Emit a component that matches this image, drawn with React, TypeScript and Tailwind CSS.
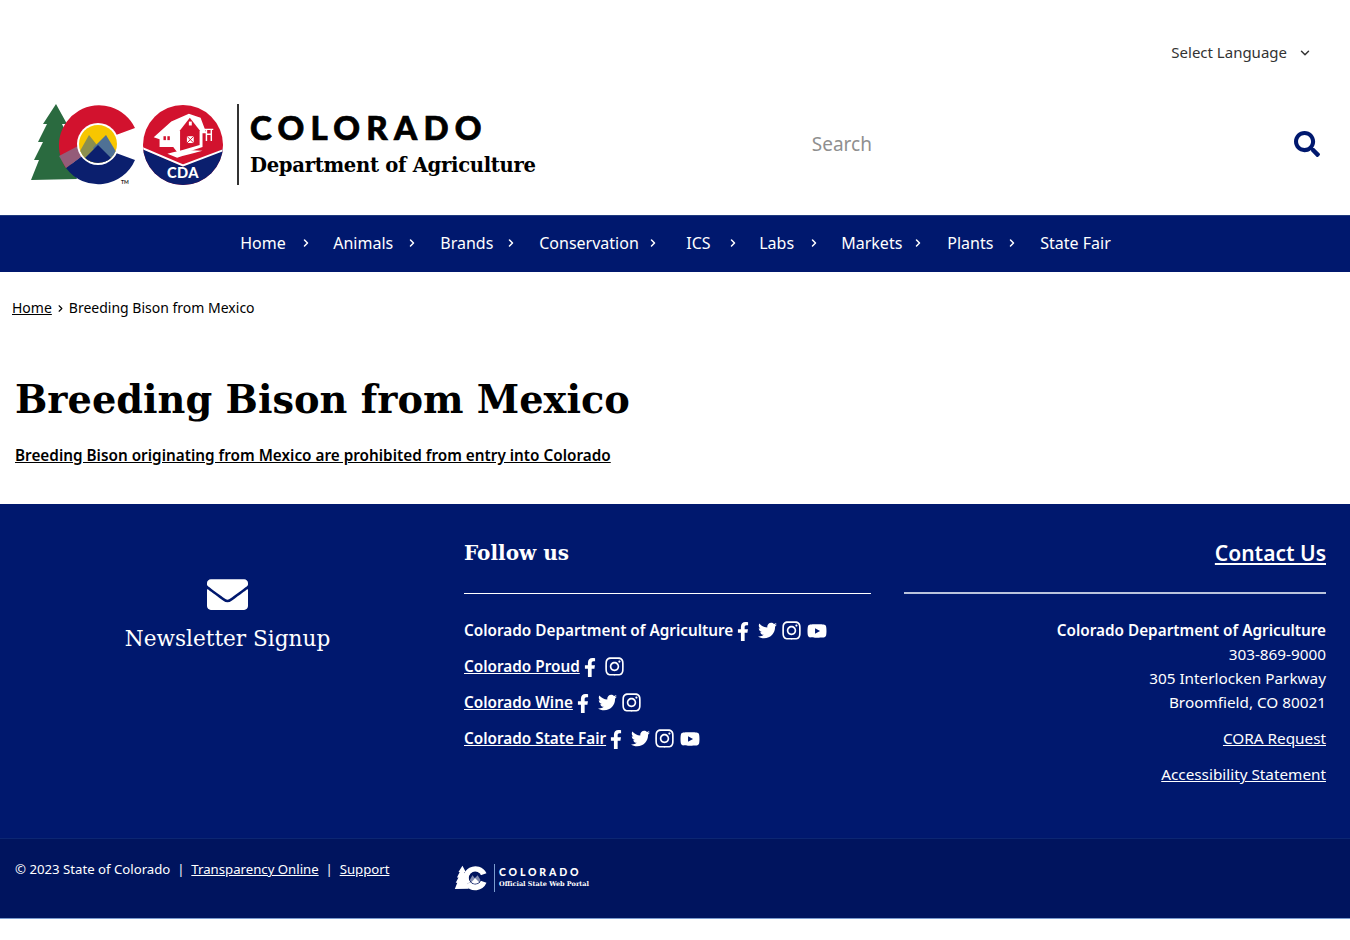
import React from "react";
import { FaFacebookF, FaTwitter, FaInstagram, FaYoutube, FaEnvelope, FaSearch } from "react-icons/fa";
import { LuChevronRight, LuChevronDown } from "react-icons/lu";

const body = "font-['Noto_Sans','Open_Sans',sans-serif]";
const slab = "font-['DejaVu_Serif',serif]";

const nav = [
  ["Home", "w-[93px] pr-[21px]"],
  ["Animals", "w-[107px] pr-[22px]"],
  ["Brands", "w-[99px] pr-[22px]"],
  ["Conservation", "w-[147px] pr-[27px]"],
  ["ICS", "w-[73px] pr-[20px]"],
  ["Labs", "w-[82px] pr-[21px]"],
  ["Markets", "w-[106px] pr-[23px]"],
  ["Plants", "w-[93px] pr-[22px]"],
];

function Mark({ mono = false, className = "" }: { mono?: boolean; className?: string }) {
  const red = mono ? "#ffffff" : "#d2122e";
  const navy = mono ? "#ffffff" : "#0b1f6e";
  const green = mono ? "#ffffff" : "#2a6a3f";
  return (
    <svg viewBox="0 0 115 92" className={className}>
      <path fill={green} d="M31 6 L42 26 L37 26 L46 44 L41 44 L50 62 L44 62 L52 81 L6 82 L14 62 L9 62 L18 44 L13 44 L22 26 L18 26 Z" />
      <path fill={red} d="M110 30 A40 40 0 1 0 41 70 L57 58 A20 20 0 1 1 91 37 Z" />
      <path fill={navy} d="M41 70 A40 40 0 0 0 110 62 L91 55 A20 20 0 0 1 57 58 Z" />
      {!mono && <path fill="#8a6a86" d="M41 70 L57 58 L53 48 L34 58 Z" opacity="0.85" />}
      <circle cx="73" cy="46" r="21" fill={mono ? "#00145e" : "#ffffff"} />
      <clipPath id={mono ? "cm" : "cc"}><circle cx="73" cy="46" r="19" /></clipPath>
      <g clipPath={`url(#${mono ? "cm" : "cc"})`}>
        <rect x="50" y="25" width="46" height="42" fill={mono ? "#00145e" : "#f7c600"} />
        <path fill={mono ? "#ffffff" : "#8c8f4e"} opacity={mono ? 0.5 : 1} d="M50 62 L64 37 L76 52 L70 70 Z" />
        <path fill={mono ? "#ffffff" : "#4f7195"} opacity={mono ? 0.5 : 1} d="M68 50 L81 37 L96 62 L80 70 Z" />
        <path fill={mono ? "#ffffff" : "#0b1f6e"} d="M50 70 L73 47 L96 70 Z" />
      </g>
      {!mono && <text x="96" y="86" fontSize="5" fontWeight="700" fill="#222" fontFamily="Lato, sans-serif">TM</text>}
    </svg>
  );
}

function Cda({ className = "" }: { className?: string }) {
  return (
    <svg viewBox="0 0 84 84" className={className}>
      <clipPath id="cda"><circle cx="42" cy="42" r="41" /></clipPath>
      <g clipPath="url(#cda)">
        <rect width="84" height="84" fill="#d2122e" />
        <path fill="#0b1f6e" d="M0 46 L42 64 L84 46 L84 84 L0 84 Z" />
        <path fill="none" stroke="#fff" strokeWidth="2" d="M0 45 L42 63 L84 47" />
        <path fill="#fff" d="M12 34 L30 18 L48 10 L60 14 L66 30 L62 30 L62 44 L38 52 L32 44 L18 44 L18 36 Z" />
        <path fill="#d2122e" d="M39 27 L49 14 L59 27 L59 42 L39 48 Z" />
        <rect x="46" y="33" width="7" height="7" fill="#fff" />
        <path stroke="#d2122e" strokeWidth="1" d="M46 33 L53 40 M53 33 L46 40" />
        <rect x="48" y="18" width="3" height="4" fill="#fff" />
        <rect x="22" y="33" width="2.5" height="4" fill="#d2122e" />
        <rect x="26" y="33" width="2.5" height="4" fill="#d2122e" />
        <path stroke="#fff" strokeWidth="1.5" fill="none" d="M63 26 H73 M66 26 V38 M71 26 V38 M66 31 H71" />
        <path fill="#fff" d="M26 51 Q42 46 62 48 Q46 52 36 55 Z" />
        <text x="42" y="76" textAnchor="middle" fontSize="15" fontWeight="900" fill="#fff" fontFamily="Lato, sans-serif" letterSpacing="0.5">CDA</text>
      </g>
    </svg>
  );
}

function Social({ f = true, t = true, i = true, y = true }: { f?: boolean; t?: boolean; i?: boolean; y?: boolean }) {
  return (
    <span className="flex items-center">
      {f && <FaFacebookF className="w-[20px] h-[19px] mt-[2px]" />}
      {t && <FaTwitter className="w-[19px] h-[19px] ml-[5px] mt-[1px]" />}
      {i && <FaInstagram className="w-[21px] h-[21px] ml-[4px] mt-[1px]" />}
      {y && <FaYoutube className="w-[20px] h-[20px] ml-[5px] mt-[1px]" />}
    </span>
  );
}

export default function App() {
  return (
    <div className={`${body} min-h-[940px] bg-white text-black`}>
      <header className="h-[215px]">
        <div className="h-[98px] flex justify-end pr-[38px] pt-[41px]">
          <div className="flex items-start text-[15px] leading-[22px] text-[#333]">
            <span>Select Language</span>
            <LuChevronDown className="w-[14px] h-[14px] ml-[11px] mt-[5px]" strokeWidth={2.5} />
          </div>
        </div>
        <div className="flex items-start">
          <div className="flex items-start pl-[25px] h-[92px]">
            <Mark className="w-[115px] h-[92px]" />
            <Cda className="w-[82px] h-[82px] ml-[2px] mt-[6px]" />
            <div className="w-[2px] h-[81px] mt-[6px] bg-[#333] ml-[13px]" />
            <div className="ml-[11px] flex flex-col pt-[14px]">
              <span className="font-['Lato',sans-serif] font-black text-[33px] leading-[30px] tracking-[0.19em] [-webkit-text-stroke:0.7px_#000]">COLORADO</span>
              <span className={`${slab} font-bold text-[19.6px] leading-[26px] mt-[11px] tracking-[-0.3px] whitespace-nowrap`}>Department of Agriculture</span>
            </div>
          </div>
          <div className="flex-1 flex items-center justify-between pl-[276px] pr-[30px] h-[92px]">
            <span className="text-[19px] leading-[28px] text-[#8f8f8f]">Search</span>
            <FaSearch className="w-[26px] h-[26px] text-[#00186e]" />
          </div>
        </div>
      </header>

      <nav className="h-[57px] bg-[#00186e] border-t border-[#1f3a7d] text-white text-[16px] flex items-center justify-center pb-[2px] pl-[1px]">
        {nav.map(([label, w]) => (
          <div key={label} className={`${w} flex items-center justify-between`}>
            <span>{label}</span>
            <LuChevronRight className="w-[12px] h-[12px]" strokeWidth={3} />
          </div>
        ))}
        <span>State Fair</span>
      </nav>

      <div className="pl-[12px] pt-[26px] text-[14px] leading-[20px] flex items-center">
        <a className="underline">Home</a>
        <LuChevronRight className="w-[11px] h-[11px] mx-[3px]" strokeWidth={2.5} />
        <span>Breeding Bison from Mexico</span>
      </div>

      <main className="pl-[15px] pt-[54px] h-[186px]">
        <h1 className={`${slab} font-bold text-[38.3px] leading-[56px]`}>Breeding Bison from Mexico</h1>
        <a className="block mt-[15px] underline font-semibold text-[15.3px] leading-[24px]">Breeding Bison originating from Mexico are prohibited from entry into Colorado</a>
      </main>

      <footer className="bg-[#00186e] text-white">
        <div className="h-[334px] flex">
          <div className="w-[455px] flex flex-col items-center pt-[70px]">
            <FaEnvelope className="w-[41px] h-[41px]" />
            <span className={`${slab} text-[21.6px] leading-[30px] mt-[9px]`}>Newsletter Signup</span>
          </div>
          <div className="w-[407px] ml-[9px] pt-[34px]">
            <h2 className={`${slab} font-bold text-[20px] leading-[30px] h-[56px] border-b border-white`}>Follow us</h2>
            <ul className="mt-[24px] text-[15.3px] font-semibold leading-[24px] flex flex-col gap-[12px]">
              <li className="flex items-center whitespace-nowrap">Colorado Department of Agriculture<Social /></li>
              <li className="flex items-center whitespace-nowrap"><a className="underline">Colorado Proud</a><Social t={false} y={false} /></li>
              <li className="flex items-center whitespace-nowrap"><a className="underline">Colorado Wine</a><Social y={false} /></li>
              <li className="flex items-center whitespace-nowrap"><a className="underline">Colorado State Fair</a><Social /></li>
            </ul>
          </div>
          <div className="w-[422px] ml-[33px] pt-[34px] text-right text-[15.3px] leading-[24px]">
            <div className="h-[56px] border-b-2 border-[#b9c3dc]">
              <a className="underline font-semibold text-[21px] leading-[30px]">Contact Us</a>
            </div>
            <p className="mt-[24px] font-semibold">Colorado Department of Agriculture</p>
            <p>303-869-9000</p>
            <p>305 Interlocken Parkway</p>
            <p>Broomfield, CO 80021</p>
            <p className="mt-[12px]"><a className="underline">CORA Request</a></p>
            <p className="mt-[12px]"><a className="underline">Accessibility Statement</a></p>
          </div>
        </div>
        <div className="h-[81px] bg-[#00145e] border-t border-[#0c2672] border-b border-b-[#7b9ccf] flex items-start">
          <div className="w-[440px] pl-[15px] pt-[20px] text-[13.2px] leading-[20px] whitespace-nowrap">
            © 2023 State of Colorado &nbsp;|&nbsp; <a className="underline">Transparency Online</a> &nbsp;|&nbsp; <a className="underline">Support</a>
          </div>
          <div className="flex items-center ml-[13px] mt-[25px] h-[28px]">
            <Mark mono className="w-[35px] h-[28px]" />
            <div className="w-[1px] h-[28px] bg-[#7b9ccf] ml-[6px]" />
            <div className="ml-[4px] flex flex-col">
              <span className="font-['Lato',sans-serif] font-black text-[10.5px] leading-[12px] tracking-[0.27em]">COLORADO</span>
              <span className={`${slab} font-bold text-[6.5px] leading-[11px] mt-[1px] whitespace-nowrap`}>Official State Web Portal</span>
            </div>
          </div>
        </div>
      </footer>
    </div>
  );
}
